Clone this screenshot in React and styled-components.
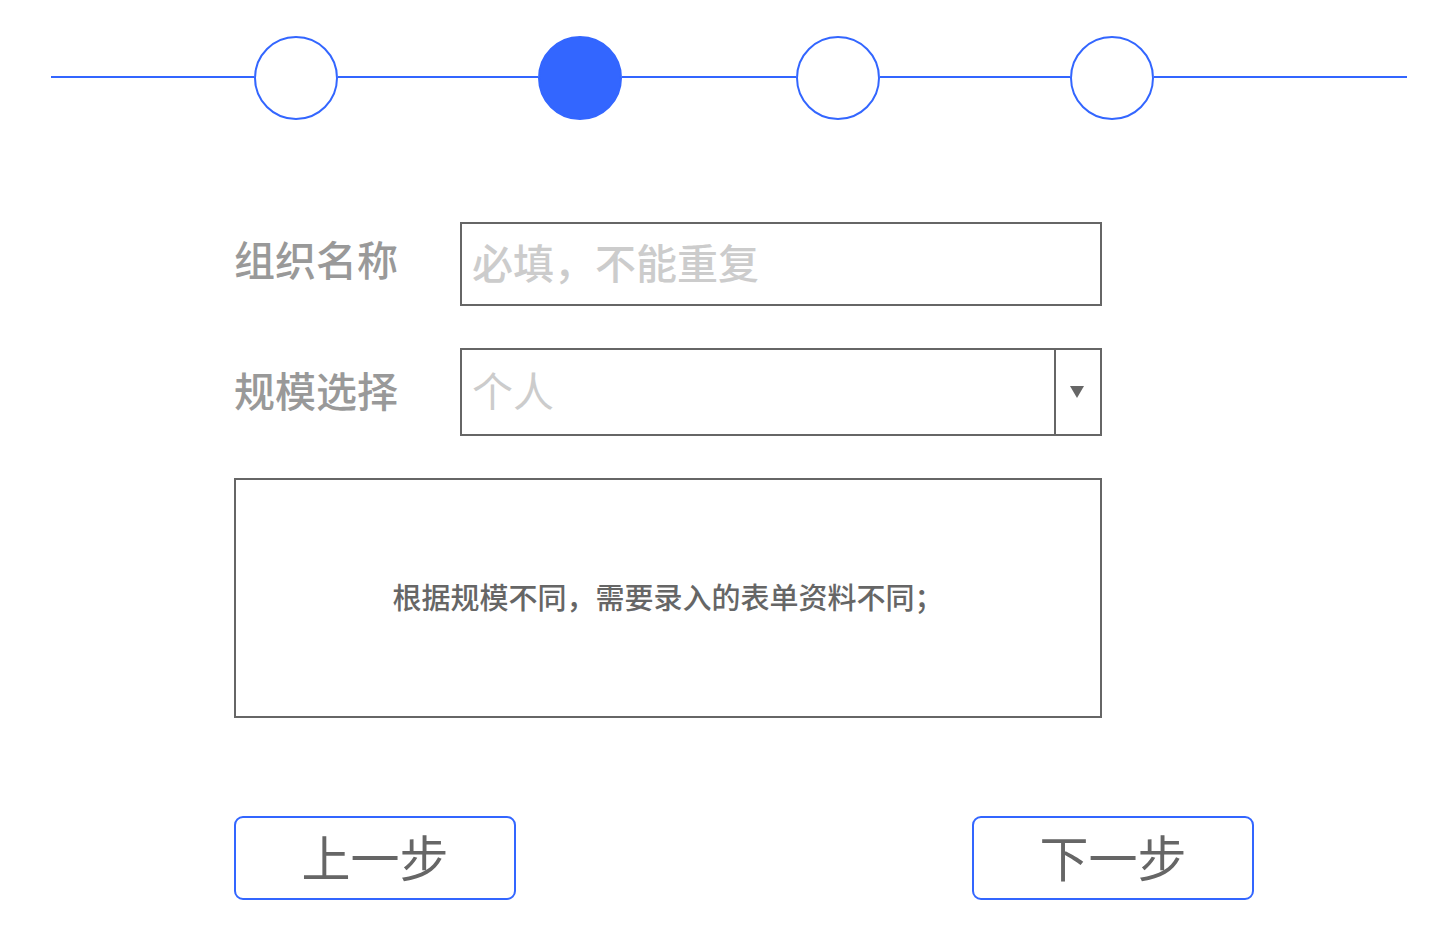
import React, { useState } from "react";
import styled, { createGlobalStyle } from "styled-components";

const BLUE = "#3366ff";
const GREY = "#666666";

const GlobalStyle = createGlobalStyle`
  *, *::before, *::after { box-sizing: border-box; }
  body {
    margin: 0;
    background: #ffffff;
    color: ${GREY};
    font-family: "Noto Sans CJK SC", "Liberation Sans", sans-serif;
    font-weight: 500;
  }
  input, select, button { font-family: inherit; font-weight: inherit; }
`;

const Page = styled.div`
  padding: 36px 0 52px;
`;

const Steps = styled.nav`
  display: flex;
  align-items: center;
  padding: 0 29px 0 51px;
`;

const Line = styled.span`
  flex: ${({ $weight }) => $weight} 1 0;
  height: 2px;
  margin-bottom: 2px;
  background: ${BLUE};
`;

const Step = styled.button`
  flex: none;
  width: 84px;
  height: 84px;
  padding: 0;
  border: 2px solid ${BLUE};
  border-radius: 50%;
  background: ${({ $active }) => ($active ? BLUE : "#ffffff")};
  cursor: pointer;
`;

const Form = styled.form`
  padding: 102px 182px 0 234px;
`;

const Fields = styled.div`
  display: flex;
  flex-direction: column;
  gap: 42px;
  margin-right: 152px;
`;

const Row = styled.div`
  display: grid;
  grid-template-columns: 226px 1fr;
  align-items: center;
`;

const Label = styled.label`
  padding-bottom: ${({ $raised }) => ($raised ? 12 : 6)}px;
  font-size: 41px;
  line-height: 60px;
  color: #999999;
`;

const TextInput = styled.input`
  width: 100%;
  min-width: 0;
  height: 84px;
  padding: 0 10px 6px;
  border: 2px solid ${GREY};
  border-radius: 0;
  outline: none;
  background: #ffffff;
  font-size: 41px;
  color: ${GREY};

  &::placeholder { color: #cccccc; opacity: 1; }
`;

const SelectBox = styled.div`
  position: relative;
  height: 88px;
  border: 2px solid ${GREY};
`;

const Select = styled.select`
  appearance: none;
  width: 100%;
  height: 100%;
  padding: 0 56px 6px 10px;
  border: 0;
  outline: none;
  background: #ffffff;
  font-size: 41px;
  font-weight: 400;
  color: #cccccc;
`;

const Arrow = styled.span`
  position: absolute;
  top: 0;
  right: 0;
  bottom: 0;
  display: grid;
  place-items: center;
  width: 46px;
  padding-right: 2px;
  border-left: 2px solid ${GREY};
  pointer-events: none;
`;

const Notice = styled.div`
  display: grid;
  place-items: center;
  min-height: 240px;
  padding-bottom: 4px;
  border: 2px solid ${GREY};
  font-size: 29px;
  line-height: 42px;

  p { margin: 0; }
`;

const Actions = styled.div`
  display: flex;
  justify-content: space-between;
  margin-top: 98px;
`;

const ActionButton = styled.button`
  width: 282px;
  height: 84px;
  padding: 0 0 4px;
  border: 2px solid ${BLUE};
  border-radius: 9px;
  background: #ffffff;
  font-size: 49px;
  font-weight: 400;
  line-height: 72px;
  color: ${GREY};
  cursor: pointer;
`;

const LINES = [203, 200, 174, 190];

export default function App() {
  const [step, setStep] = useState(1);
  const move = (by) => setStep((s) => Math.min(3, Math.max(0, s + by)));

  return (
    <>
      <GlobalStyle />
      <Page>
        <Steps>
          {LINES.map((weight, i) => (
            <React.Fragment key={i}>
              <Line $weight={weight} />
              <Step
                type="button"
                $active={i === step}
                aria-label={`${i + 1}`}
                aria-current={i === step ? "step" : undefined}
                onClick={() => setStep(i)}
              />
            </React.Fragment>
          ))}
          <Line $weight={253} />
        </Steps>
        <Form onSubmit={(e) => e.preventDefault()}>
          <Fields>
            <Row>
              <Label htmlFor="org-name" $raised>组织名称</Label>
              <TextInput id="org-name" type="text" placeholder="必填，不能重复" />
            </Row>
            <Row>
              <Label htmlFor="org-size">规模选择</Label>
              <SelectBox>
                <Select id="org-size">
                  <option>个人</option>
                </Select>
                <Arrow>
                  <svg width="14" height="12" viewBox="0 0 14 12" aria-hidden="true">
                    <path d="M0 0H14L7 12Z" fill={GREY} />
                  </svg>
                </Arrow>
              </SelectBox>
            </Row>
            <Notice>
              <p>根据规模不同，需要录入的表单资料不同；</p>
            </Notice>
          </Fields>
          <Actions>
            <ActionButton type="button" onClick={() => move(-1)}>上一步</ActionButton>
            <ActionButton type="button" onClick={() => move(1)}>下一步</ActionButton>
          </Actions>
        </Form>
      </Page>
    </>
  );
}
